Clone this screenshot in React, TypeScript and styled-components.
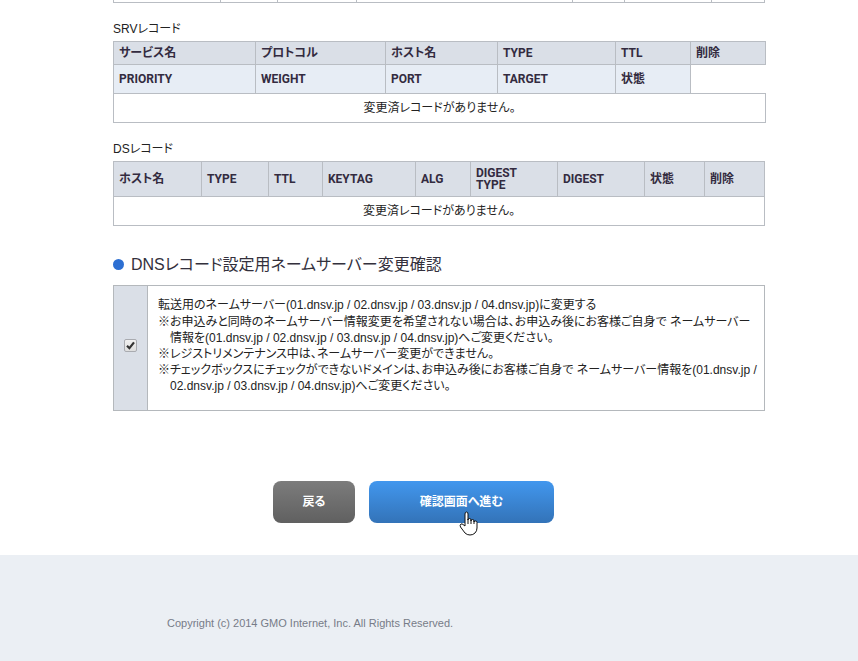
import React from 'react';
import styled, { createGlobalStyle } from 'styled-components';

const GlobalStyle = createGlobalStyle`
  *, *::before, *::after { box-sizing: border-box; }
  body {
    margin: 0;
    background: #fff;
    color: #222;
    font-family: "Liberation Sans", "Noto Sans CJK JP", sans-serif;
    font-size: 12px;
    line-height: 16px;
    font-feature-settings: "palt";
  }
`;

const Page = styled.div`
  display: flex;
  flex-direction: column;
  min-height: 100vh;
`;

const Main = styled.main`
  flex: 1;
  padding: 0 93px 32px 113px;
`;

const Table = styled.table<{ $wide?: boolean }>`
  width: ${(p) => (p.$wide ? 'calc(100% + 1px)' : '100%')};
  table-layout: fixed;
  border-collapse: collapse;
`;

const Label = styled.h3`
  margin: 18px 0 4px;
  font-size: 12px;
  line-height: 16px;
  font-weight: 400;
`;

const HeadCell = styled.th<{ $height: number; $light?: boolean }>`
  height: ${(p) => p.$height}px;
  padding: 0 5px;
  border: 1px solid #b9bdc3;
  background: ${(p) => (p.$light ? '#e7edf5' : '#dadfe7')};
  color: #332b40;
  font-family: Roboto, "Noto Sans CJK JP", sans-serif;
  font-weight: 700;
  line-height: 12px;
  text-align: left;
  white-space: pre-line;
`;

const EmptyCell = styled.td`
  height: 29px;
  padding: 0;
  border: 1px solid #b9bdc3;
  text-align: center;
`;

const TailCell = styled.td`
  height: 2px;
  padding: 0;
  border: 1px solid #b9bdc3;
  border-top: 0;
`;

const Heading = styled.h2`
  display: flex;
  align-items: center;
  gap: 7px;
  margin: 27px 0 8px;
  color: #33303c;
  font-size: 16px;
  line-height: 24px;
  font-weight: 400;

  &::before {
    content: "";
    width: 11px;
    height: 11px;
    border-radius: 50%;
    background: #2d6fd2;
  }
`;

const Confirm = styled.section`
  display: grid;
  grid-template-columns: 34px 1fr;
  border: 1px solid #b4b8bc;
`;

const CheckArea = styled.div`
  display: grid;
  place-items: center;
  border-right: 1px solid #b4b8bc;
  background: #dadfe7;
  padding-bottom: 4px;

  > * { grid-area: 1 / 1; }
`;

const Checkbox = styled.input`
  appearance: none;
  width: 13px;
  height: 13px;
  margin: 0;
  border: 1px solid #a9abb0;
  border-radius: 2px;
  background: linear-gradient(#f1f1f1, #dedede);

  &:not(:checked) + svg { visibility: hidden; }
`;

const Tick = styled.svg`
  width: 13px;
  height: 13px;
  pointer-events: none;
`;

const ConfirmText = styled.div`
  padding: 11px 4px 16px 10px;
`;

const ConfirmLabel = styled.label`
  display: block;
  margin-bottom: 1px;
`;

const Note = styled.p`
  margin: 0;
  padding-left: 12px;
  text-indent: -12px;

  span { display: block; text-indent: 0; }
`;

const Actions = styled.div`
  display: flex;
  justify-content: center;
  gap: 14px;
  margin-top: 70px;
  padding-right: 51px;
`;

const Button = styled.button<{ $primary?: boolean }>`
  position: relative;
  width: ${(p) => (p.$primary ? 185 : 82)}px;
  height: 42px;
  padding: 0;
  border: 0;
  border-radius: 8px;
  background: ${(p) =>
    p.$primary ? 'linear-gradient(#4297ee, #3373b8)' : 'linear-gradient(#7c7c7c, #606060)'};
  color: #fff;
  font: inherit;
  font-weight: 700;
  cursor: pointer;
`;

const Pointer = styled.svg`
  position: absolute;
  left: 90px;
  top: 30px;
  width: 19px;
  height: 25px;
`;

const Footer = styled.footer`
  height: 106px;
  padding: 60px 167px 0;
  background: #ebeff4;
  color: #777c88;
  font-size: 11px;
`;

const tailColumns = [107, 57, 79, 216, 52, 87, 53];
const srvColumns = [142, 130, 112, 118, 75, 75];
const dsColumns = [88, 67, 54, 93, 55, 87, 87, 60, 60];

const Columns = ({ widths }: { widths: number[] }) => {
  const total = widths.reduce((a, b) => a + b, 0);
  return (
    <colgroup>
      {widths.map((w, i) => (
        <col key={i} style={{ width: `${(w / total) * 100}%` }} />
      ))}
    </colgroup>
  );
};

export default function App() {
  return (
    <>
      <GlobalStyle />
      <Page>
        <Main>
          <Table>
            <Columns widths={tailColumns} />
            <tbody>
              <tr>{tailColumns.map((_, i) => <TailCell key={i} />)}</tr>
            </tbody>
          </Table>

          <Label id="srv">SRVレコード</Label>
          <Table aria-labelledby="srv" $wide>
            <Columns widths={srvColumns} />
            <thead>
              <tr>
                {['サービス名', 'プロトコル', 'ホスト名', 'TYPE', 'TTL', '削除'].map((t) => (
                  <HeadCell key={t} $height={23}>{t}</HeadCell>
                ))}
              </tr>
              <tr>
                {['PRIORITY', 'WEIGHT', 'PORT', 'TARGET', '状態'].map((t) => (
                  <HeadCell key={t} $height={29} $light>{t}</HeadCell>
                ))}
              </tr>
            </thead>
            <tbody>
              <tr><EmptyCell colSpan={6}>変更済レコードがありません。</EmptyCell></tr>
            </tbody>
          </Table>

          <Label id="ds">DSレコード</Label>
          <Table aria-labelledby="ds">
            <Columns widths={dsColumns} />
            <thead>
              <tr>
                {['ホスト名', 'TYPE', 'TTL', 'KEYTAG', 'ALG', 'DIGEST\nTYPE', 'DIGEST', '状態', '削除'].map((t) => (
                  <HeadCell key={t} $height={35}>{t}</HeadCell>
                ))}
              </tr>
            </thead>
            <tbody>
              <tr><EmptyCell colSpan={9}>変更済レコードがありません。</EmptyCell></tr>
            </tbody>
          </Table>

          <Heading>DNSレコード設定用ネームサーバー変更確認</Heading>
          <Confirm>
            <CheckArea>
              <Checkbox type="checkbox" id="change-ns" defaultChecked />
              <Tick viewBox="0 0 13 13" aria-hidden="true">
                <path d="M3 6.8 5.4 9.2 10 3.4" fill="none" stroke="#333" strokeWidth="2.2" />
              </Tick>
            </CheckArea>
            <ConfirmText>
              <ConfirmLabel htmlFor="change-ns">
                転送用のネームサーバー(01.dnsv.jp / 02.dnsv.jp / 03.dnsv.jp / 04.dnsv.jp)に変更する
              </ConfirmLabel>
              <Note>
                ※お申込みと同時のネームサーバー情報変更を希望されない場合は、お申込み後にお客様ご自身で ネームサーバー
                <span>情報を(01.dnsv.jp / 02.dnsv.jp / 03.dnsv.jp / 04.dnsv.jp)へご変更ください。</span>
              </Note>
              <Note>※レジストリメンテナンス中は、ネームサーバー変更ができません。</Note>
              <Note>
                ※チェックボックスにチェックができないドメインは、お申込み後にお客様ご自身で ネームサーバー情報を(01.dnsv.jp /
                <span>02.dnsv.jp / 03.dnsv.jp / 04.dnsv.jp)へご変更ください。</span>
              </Note>
            </ConfirmText>
          </Confirm>

          <Actions>
            <Button type="button">戻る</Button>
            <Button type="button" $primary>
              確認画面へ進む
              <Pointer viewBox="0 0 19 25" aria-hidden="true">
                <path
                  d="M6 15V3Q6 1 7.5 1T9 3V9Q9 7.500 10.500 7.500T12 9V10Q12 8.500 13.500 8.500T15 10V11Q15 10 16.500 10T18 11.500V17Q18 20 16 22Q14 24 11 24Q8 24 6 22L1.500 16Q0.500 14 2 13Q3 12.500 4 13.500Z"
                  fill="#fff"
                  stroke="#111"
                  strokeWidth="1"
                />
                <path d="M9 8v5M12 9v4M15 10v3" fill="none" stroke="#111" strokeWidth="1" />
              </Pointer>
            </Button>
          </Actions>
        </Main>
        <Footer>Copyright (c) 2014 GMO Internet, Inc. All Rights Reserved.</Footer>
      </Page>
    </>
  );
}
